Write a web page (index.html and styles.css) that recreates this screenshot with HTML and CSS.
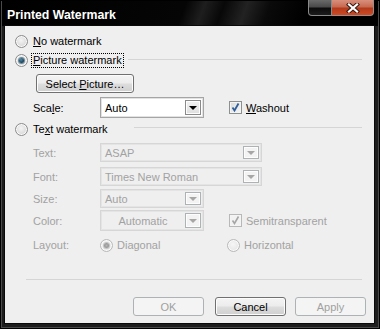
FILE: index.html
```html
<!DOCTYPE html>
<html>
<head>
	<title>Printed Watermark</title>
	<meta charset="utf-8">
	<link rel="stylesheet" href="styles.css">
</head>
<body>
  <div class="window">
    <div class="titlebar">
      <span class="title">Printed Watermark</span>
      <div class="caption-btns">
        <div class="cap-max"></div>
        <div class="cap-close">
          <svg width="16" height="10" viewBox="0 0 16 10">
            <path d="M4 1.5 L12 8.5 M12 1.5 L4 8.5" stroke="#3a1a12" stroke-width="4.2" stroke-linecap="square"/>
            <path d="M4 1.5 L12 8.5 M12 1.5 L4 8.5" stroke="#ffffff" stroke-width="2.2" stroke-linecap="square"/>
          </svg>
        </div>
      </div>
    </div>

    <div class="client">
      <div class="opt row1">
        <span class="radio"></span>
        <span class="opt-label"><u>N</u>o watermark</span>
      </div>
      <div class="opt row2">
        <span class="radio on"></span>
        <span class="opt-label focus"><u>P</u>icture watermark</span>
        <span class="sep"></span>
      </div>
      <div class="btn-row">
        <button class="btn select-btn">Select <u>P</u>icture…</button>
      </div>
      <div class="field scale-row">
        <span class="lbl">Sca<u>l</u>e:</span>
        <div class="combo small">
          <span class="combo-text">Auto</span>
          <span class="drop"><i class="tri"></i></span>
        </div>
        <span class="check on"><svg width="11" height="11" viewBox="0 0 11 11"><path d="M2.5 5.5 L4.5 8.5 L8.5 1.5" fill="none" stroke="#2f5f9a" stroke-width="1.8"/></svg></span>
        <span class="check-label"><u>W</u>ashout</span>
      </div>
      <div class="opt row3">
        <span class="radio"></span>
        <span class="opt-label">Te<u>x</u>t watermark</span>
        <span class="sep sep-text"></span>
      </div>

      <div class="field dis text-row">
        <span class="lbl">Text:</span>
        <div class="combo wide off">
          <span class="combo-text">ASAP</span>
          <span class="drop"><i class="tri"></i></span>
        </div>
      </div>
      <div class="field dis font-row">
        <span class="lbl">Font:</span>
        <div class="combo wide off">
          <span class="combo-text">Times New Roman</span>
          <span class="drop"><i class="tri"></i></span>
        </div>
      </div>
      <div class="field dis size-row">
        <span class="lbl">Size:</span>
        <div class="combo small off">
          <span class="combo-text">Auto</span>
          <span class="drop"><i class="tri"></i></span>
        </div>
      </div>
      <div class="field dis color-row">
        <span class="lbl">Color:</span>
        <div class="combo small off tall">
          <span class="combo-text center">Automatic</span>
          <span class="drop"><i class="tri"></i></span>
        </div>
        <span class="check on off"><svg width="11" height="11" viewBox="0 0 11 11"><path d="M2.5 5.5 L4.5 8.5 L8.5 1.5" fill="none" stroke="#a6a6a6" stroke-width="1.6"/></svg></span>
        <span class="check-label">Semitransparent</span>
      </div>
      <div class="field dis layout-row">
        <span class="lbl">Layout:</span>
        <span class="radio on off"></span>
        <span class="radio-text">Diagonal</span>
        <span class="radio off horiz"></span>
        <span class="radio-text">Horizontal</span>
      </div>

      <div class="bottom-sep"></div>

      <div class="actions">
        <button class="btn act off">OK</button>
        <button class="btn act cancel">Cancel</button>
        <button class="btn act apply off">Apply</button>
      </div>
    </div>
  </div>
</body>
</html>
```

FILE: styles.css
```css
html, body {
	margin: 0;
	padding: 0;
	background: #000;
}
body {
	font-family: "Liberation Sans", Arial, sans-serif;
	font-size: 11px;
	color: #000;
}
u {
	text-decoration: underline;
	text-underline-offset: 1px;
}

.window {
	width: 380px;
	height: 329px;
	box-sizing: border-box;
	padding: 0 5px 5px 4px;
	background: #1d1d1d;
	border: 1px solid #000;
	box-shadow: inset 0 0 0 1px #4a4a4a;
	display: flex;
	flex-direction: column;
	position: relative;
}
.titlebar {
	height: 25px;
	margin: 0 -4px 0 -3px;
	padding: 0 4px 0 5px;
	display: flex;
	align-items: flex-start;
	background: linear-gradient(110deg, #000 0%, #050505 48%, #1e1e1e 53%, #080808 58%, #222 64%, #0a0a0a 70%, #000 80%);
}
.title {
	color: #fff;
	font-weight: bold;
	font-size: 12.3px;
	line-height: 12px;
	margin-top: 8px;
}
.caption-btns {
	margin-left: auto;
	display: flex;
	margin-top: -1px;
}
.cap-max {
	width: 24px;
	height: 16px;
	border: 1px solid #8a8a8a;
	border-top: none;
	border-radius: 0 0 0 4px;
	background: linear-gradient(#6a6a6a 0%, #4a4a4a 45%, #0c0c0c 55%, #1c1c1c 100%);
	box-sizing: border-box;
}
.cap-close {
	width: 42px;
	height: 16px;
	box-sizing: border-box;
	border: 1px solid #9a8f8c;
	border-top: none;
	border-left: none;
	border-radius: 0 0 4px 0;
	background: linear-gradient(#d88f7c 0%, #c86a52 45%, #b23a1c 55%, #d04a22 100%);
	display: flex;
	align-items: center;
	justify-content: center;
}

.client {
	flex: 1;
	background: #efefef;
	padding: 6px 12px 0 10px;
	box-shadow: 0 0 0 1px #0a0a0a;
}

.opt {
	height: 18px;
	display: flex;
	align-items: center;
}
.row2 {
	margin-top: 1px;
}
.row3 {
	margin-top: 2px;
}
.opt-label {
	margin-left: 3px;
	padding: 0 1px;
	line-height: 13px;
	border: 1px dotted transparent;
}
.opt-label.focus {
	border-color: #000;
}
.sep {
	flex: 1;
	height: 1px;
	background: #d5d5d5;
	margin-left: 4px;
	margin-top: -1px;
}
.sep-text {
	margin-left: 24px;
	margin-top: -3px;
}

.radio {
	width: 13px;
	height: 13px;
	box-sizing: border-box;
	border-radius: 50%;
	border: 1px solid #8b8b8b;
	background: radial-gradient(circle at 45% 40%, #f4f4f4 0%, #dcdcdc 60%, #cfcfcf 100%);
	box-shadow: inset 0 0 0 1px #fafafa;
	flex: none;
	display: flex;
	align-items: center;
	justify-content: center;
}
.radio.on::after {
	content: '';
	width: 5px;
	height: 5px;
	border-radius: 50%;
	background: radial-gradient(circle at 40% 35%, #4e8aa6 0%, #163a50 70%);
	box-shadow: 0 0 0 1px #6b8a9a;
}
.radio.off {
	border-color: #b9b9b9;
	background: radial-gradient(circle at 45% 40%, #f6f6f6 0%, #e6e6e6 70%);
}
.radio.on.off::after {
	background: radial-gradient(circle, #b5b5b5 0%, #8e8e8e 80%);
	box-shadow: 0 0 0 1px #c4c4c4;
}

.btn {
	font-family: "Liberation Sans", Arial, sans-serif;
	font-size: 11px;
	color: #000;
	height: 19px;
	padding: 0;
	box-sizing: border-box;
	border: 1px solid #707070;
	border-radius: 3px;
	background: linear-gradient(#f4f4f4 0%, #ececec 48%, #dddddd 52%, #cfcfcf 100%);
	box-shadow: inset 0 0 0 1px #fcfcfc;
}
.btn-row {
	margin-top: 5px;
	height: 19px;
	display: flex;
}
.select-btn {
	margin-left: 21px;
	width: 98px;
}

.field {
	display: flex;
	align-items: center;
	padding-left: 18px;
}
.lbl {
	width: 67px;
	flex: none;
}
.dis {
	color: #a2a2a2;
}
.scale-row {
	margin-top: 4px;
	height: 21px;
}
.text-row {
	margin-top: 5px;
	height: 19px;
}
.font-row {
	margin-top: 5px;
	height: 19px;
}
.size-row {
	margin-top: 3px;
	height: 19px;
}
.color-row {
	margin-top: 2px;
	height: 21px;
}
.layout-row {
	margin-top: 5px;
	height: 18px;
}

.combo {
	height: 100%;
	box-sizing: border-box;
	border: 1px solid #a5a5a5;
	box-shadow: inset 0 0 0 1px #e2e2e2;
	background: #fff;
	display: flex;
	align-items: center;
	padding: 0 2px 0 4px;
}
.combo.small {
	width: 104px;
}
.combo.wide {
	width: 162px;
}
.combo.off {
	border-color: #d6d6d6;
	box-shadow: inset 0 0 0 1px #e4e4e4;
	background: #efefef;
}
.combo-text {
	flex: 1;
}
.combo-text.center {
	text-align: center;
	padding-right: 4px;
}
.drop {
	width: 16px;
	height: calc(100% - 4px);
	box-sizing: border-box;
	border: 1px solid #8a8a8a;
	box-shadow: inset 0 0 0 1px #fdfdfd;
	background: linear-gradient(#f2f2f2, #dedede);
	display: flex;
	align-items: center;
	justify-content: center;
}
.off .drop {
	border-color: #adb2b5;
	background: #f3f3f3;
}
.tri {
	width: 0;
	height: 0;
	border-left: 4px solid transparent;
	border-right: 4px solid transparent;
	border-top: 4px solid #000;
	margin-top: 1px;
}
.off .tri {
	border-top-color: #a6a6a6;
}

.check {
	width: 13px;
	height: 13px;
	box-sizing: border-box;
	border: 1px solid #8e8f8f;
	background: linear-gradient(135deg, #dcdcdc, #f6f6f6);
	box-shadow: inset 0 0 0 1px #f4f4f4;
	margin-left: 25px;
	flex: none;
	display: flex;
	align-items: center;
	justify-content: center;
}
.check.off {
	border-color: #b8b8b8;
	background: #f2f2f2;
}
.check-label {
	margin-left: 4px;
}
.radio-text {
	margin-left: 4px;
	width: 110px;
}
.horiz {
	margin-left: 0;
}

.bottom-sep {
	margin: 25px 0 0 11px;
	height: 1px;
	background: #d5d5d5;
}
.actions {
	margin-top: 17px;
	margin-right: -4px;
	display: flex;
	justify-content: flex-end;
}
.act {
	width: 71px;
}
.act.cancel {
	margin-left: 11px;
}
.act.apply {
	margin-left: 9px;
}
.act.off {
	color: #a0a0a0;
	border-color: #adb2b5;
	background: #f4f4f4;
	box-shadow: none;
}
```
